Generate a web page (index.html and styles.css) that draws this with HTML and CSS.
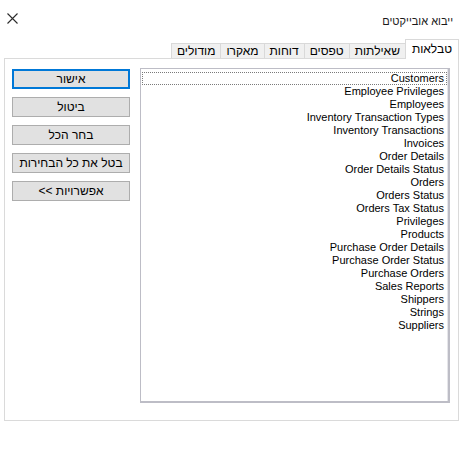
FILE: index.html
```html
<!DOCTYPE html>
<html lang="he" dir="rtl">
<head>
<meta charset="utf-8">
<title>ייבוא אובייקטים</title>
<link rel="stylesheet" href="styles.css">
</head>
<body>
<div class="dialog">
  <div class="titlebar">
    <div class="title">ייבוא אובייקטים</div>
    <svg class="close" width="11" height="11" viewBox="0 0 11 11" aria-label="סגור">
      <path d="M0.5 0.5 L10.5 10.5 M10.5 0.5 L0.5 10.5" stroke="#2b2b2b" stroke-width="1.1" fill="none"/>
    </svg>
  </div>
  <div class="tabs">
    <div class="tab active">טבלאות</div>
    <div class="tab">שאילתות</div>
    <div class="tab">טפסים</div>
    <div class="tab">דוחות</div>
    <div class="tab">מאקרו</div>
    <div class="tab">מודולים</div>
  </div>
  <div class="panel">
    <div class="list">
      <div class="item focused">Customers</div>
      <div class="item">Employee Privileges</div>
      <div class="item">Employees</div>
      <div class="item">Inventory Transaction Types</div>
      <div class="item">Inventory Transactions</div>
      <div class="item">Invoices</div>
      <div class="item">Order Details</div>
      <div class="item">Order Details Status</div>
      <div class="item">Orders</div>
      <div class="item">Orders Status</div>
      <div class="item">Orders Tax Status</div>
      <div class="item">Privileges</div>
      <div class="item">Products</div>
      <div class="item">Purchase Order Details</div>
      <div class="item">Purchase Order Status</div>
      <div class="item">Purchase Orders</div>
      <div class="item">Sales Reports</div>
      <div class="item">Shippers</div>
      <div class="item">Strings</div>
      <div class="item">Suppliers</div>
    </div>
    <div class="buttons">
      <button class="btn default">אישור</button>
      <button class="btn">ביטול</button>
      <button class="btn">בחר הכל</button>
      <button class="btn">בטל את כל הבחירות</button>
      <button class="btn">אפשרויות &gt;&gt;</button>
    </div>
  </div>
</div>
</body>
</html>
```
FILE: styles.css
```css
html, body {
  margin: 0;
  background: #ffffff;
}
body {
  font-family: "Liberation Sans", Arial, sans-serif;
  color: #000000;
}
.dialog {
  width: 463px;
  height: 452px;
  direction: rtl;
}
.titlebar {
  height: 39px;
  box-sizing: border-box;
  display: flex;
  justify-content: space-between;
  align-items: flex-start;
  padding: 0 10px 0 7px;
}
.title {
  font-size: 11px;
  line-height: 14px;
  margin-top: 14px;
  color: #1a1a1a;
}
.close {
  margin-top: 13px;
  display: block;
}
.tabs {
  height: 19px;
  display: flex;
  align-items: flex-end;
  padding-right: 4px;
}
.tab {
  height: 15px;
  box-sizing: border-box;
  border: 1px solid #d9d9d9;
  border-bottom: none;
  background: #f0f0f0;
  font-size: 12px;
  line-height: 14px;
  padding: 0 5px;
  margin-left: -1px;
  white-space: nowrap;
}
.tab.active {
  height: 20px;
  margin-bottom: -1px;
  padding: 2px 6px 0;
  background: #ffffff;
  position: relative;
  z-index: 1;
}
.panel {
  margin: 0 4px;
  height: 363px;
  box-sizing: border-box;
  border: 1px solid #dadada;
  display: flex;
  gap: 10px;
  padding: 9px 8px 0 7px;
}
.list {
  width: 310px;
  height: 335px;
  box-sizing: border-box;
  border: 1px solid #bdbdc6;
  border-right-width: 2px;
  border-bottom-width: 2px;
  box-shadow: inset -1px 0 0 #e6e6ea;
  padding-top: 3px;
  font-size: 11px;
  line-height: 13px;
  text-align: right;
}
.item {
  padding-right: 3px;
  margin: 0 1px;
  white-space: nowrap;
}
.item.focused {
  outline: 1px dotted #7a7a7a;
  outline-offset: -1px;
}
.buttons {
  width: 118px;
  margin-top: 1px;
  display: flex;
  flex-direction: column;
  gap: 8px;
}
.btn {
  height: 20px;
  box-sizing: border-box;
  margin: 0;
  padding: 0;
  border: 1px solid #adadad;
  background: #e1e1e1;
  font-family: "Liberation Sans", Arial, sans-serif;
  font-size: 12px;
  line-height: 16px;
  color: #000000;
  text-align: center;
  direction: rtl;
}
.btn.default {
  border: 2px solid #0078d7;
}
```
